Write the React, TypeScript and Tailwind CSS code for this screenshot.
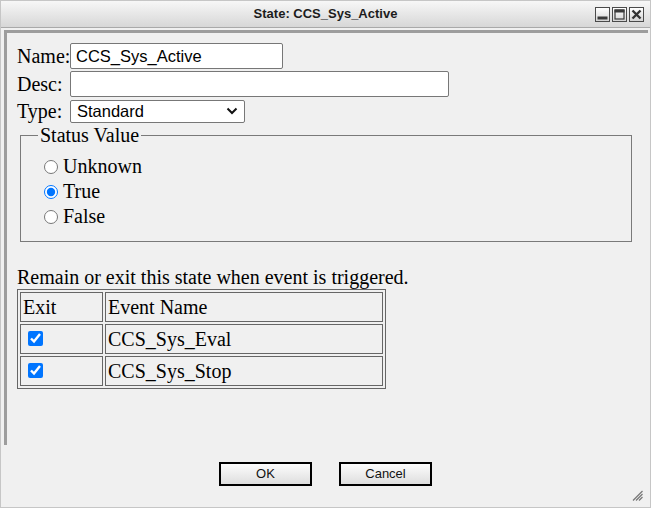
import React from 'react';

const events = ['CCS_Sys_Eval', 'CCS_Sys_Stop'];
const statuses = ['Unknown', 'True', 'False'];

const TitleButton: React.FC<{ kind: 'min' | 'max' | 'close' }> = ({ kind }) => (
  <div className="flex h-[15px] w-[15px] items-center justify-center border-[1.5px] border-[#4a4a4a] bg-linear-to-b from-white to-[#d4d4d4]">
    <svg width="11" height="11" viewBox="0 0 11 11">
      {kind === 'min' && <rect x="0.5" y="7.5" width="10" height="3" fill="#3a3a3a" />}
      {kind === 'max' && (
        <>
          <rect x="1" y="1" width="9" height="9" fill="none" stroke="#3a3a3a" strokeWidth="1.2" />
          <rect x="0.5" y="0.5" width="10" height="3" fill="#3a3a3a" />
        </>
      )}
      {kind === 'close' && <path d="M1.5 1.5 L9.5 9.5 M9.5 1.5 L1.5 9.5" stroke="#333" strokeWidth="2.4" />}
    </svg>
  </div>
);

export default function App() {
  return (
    <div className="flex h-[508px] w-[651px] flex-col overflow-hidden border border-[#c6c6c6] bg-[#f0f0f0] font-['Liberation_Serif','Times_New_Roman',serif] text-black">
      {/* title bar */}
      <div className="grid h-[27px] shrink-0 grid-cols-[1fr_auto_1fr] items-center border-b border-[#a9a9a9] bg-linear-to-b from-[#f7f7f7] to-[#d7d7d7]">
        <div />
        <div className="font-['Liberation_Sans',Arial,sans-serif] text-[13px] font-bold text-[#1c1c1c]">State: CCS_Sys_Active</div>
        <div className="mr-[6px] flex justify-self-end gap-[2px]">
          <TitleButton kind="min" />
          <TitleButton kind="max" />
          <TitleButton kind="close" />
        </div>
      </div>

      {/* content panel */}
      <div className="ml-[3px] mr-[2px] mt-[2px] h-[415px] shrink-0 border-l-[3px] border-t-[3px] border-[#9d9d9d] pl-[10px] pt-[10px] text-[20px]">
        <div className="grid grid-cols-[53px_auto] items-center gap-y-[2px] leading-[24px]">
          <span>Name:</span>
          <input
            readOnly
            value="CCS_Sys_Active"
            className="h-[26px] w-[213px] rounded-[2px] border border-[#777] bg-white px-[5px] font-['Liberation_Sans',Arial,sans-serif] text-[16.5px] outline-none"
          />
          <span>Desc:</span>
          <input
            readOnly
            value=""
            className="h-[26px] w-[379px] rounded-[2px] border border-[#777] bg-white px-[5px] font-['Liberation_Sans',Arial,sans-serif] text-[16.5px] outline-none"
          />
          <span>Type:</span>
          <div className="flex h-[23px] w-[175px] items-center justify-between rounded-[2px] border border-[#777] bg-white pl-[6px] pr-[6px] font-['Liberation_Sans',Arial,sans-serif] text-[16.5px] leading-none">
            <span>Standard</span>
            <svg width="12" height="8" viewBox="0 0 12 8">
              <path d="M1.5 1.5 L6 6 L10.5 1.5" fill="none" stroke="#111" strokeWidth="2" />
            </svg>
          </div>
        </div>

        <fieldset className="ml-[3px] mt-[1px] w-[612px] border border-[#7a7a7a] pb-[12px] pl-[17px] pt-[8px]">
          <legend className="px-[2px] leading-[22px]">Status Value</legend>
          {statuses.map((s) => (
            <label key={s} className="flex h-[25px] items-center">
              <input
                type="radio"
                name="status"
                defaultChecked={s === 'True'}
                className="ml-[6px] mr-[5px] h-[14px] w-[14px] accent-[#0075ff]"
              />
              <span className="leading-[25px]">{s}</span>
            </label>
          ))}
        </fieldset>

        <p className="mt-[23px] leading-[24px]">Remain or exit this state when event is triggered.</p>
        <table className="border-separate border-spacing-[2px] border border-[#666]">
          <tbody>
            <tr>
              <td className="w-[83px] border border-[#666] p-0">
                <div className="flex h-[28px] items-center px-[2px] leading-[24px]">Exit</div>
              </td>
              <td className="w-[278px] border border-[#666] p-0">
                <div className="flex h-[28px] items-center px-[2px] leading-[24px]">Event Name</div>
              </td>
            </tr>
            {events.map((e) => (
              <tr key={e}>
                <td className="w-[83px] border border-[#666] p-0">
                  <div className="h-[28px] px-[2px] pt-[6px]">
                    <input type="checkbox" defaultChecked className="ml-[5px] block h-[15px] w-[15px] accent-[#0075ff]" />
                  </div>
                </td>
                <td className="w-[278px] border border-[#666] p-0">
                  <div className="flex h-[28px] items-center px-[2px] leading-[24px]">{e}</div>
                </td>
              </tr>
            ))}
          </tbody>
        </table>
      </div>

      {/* buttons */}
      <div className="mt-[17px] flex justify-center gap-[27px] font-['Liberation_Sans',Arial,sans-serif] text-[13px]">
        {['OK', 'Cancel'].map((b) => (
          <button
            key={b}
            className="h-[24px] w-[93px] border-2 border-black bg-linear-to-b from-[#fdfdfd] via-[#ededed] to-[#dedede] text-[#111]"
          >
            {b}
          </button>
        ))}
      </div>

      {/* resize grip */}
      <div className="mr-[7px] mt-[4px] flex justify-end">
        <svg width="11" height="11" viewBox="0 0 11 11">
          <path d="M10.5 1 L1 10.5 M10.5 4 L4 10.5 M10.5 7 L7 10.5" stroke="#7a7a7a" strokeWidth="1.3" />
        </svg>
      </div>
    </div>
  );
}
